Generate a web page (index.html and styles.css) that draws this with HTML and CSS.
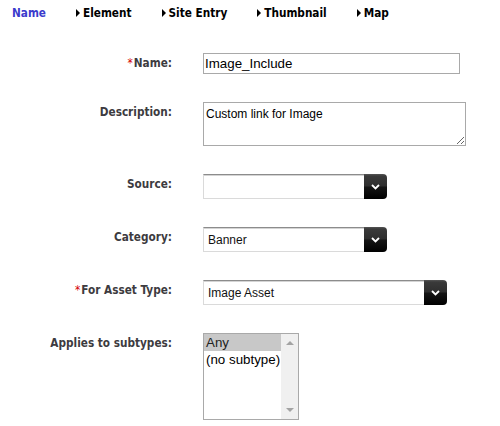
FILE: index.html
```html
<!DOCTYPE html>
<html>
<head>
<meta charset="utf-8">
<link rel="stylesheet" href="styles.css">
</head>
<body>
<nav class="tabs">
  <span class="tab active">Name</span>
  <span class="tab"><i class="tri"></i>Element</span>
  <span class="tab"><i class="tri"></i>Site Entry</span>
  <span class="tab"><i class="tri"></i>Thumbnail</span>
  <span class="tab"><i class="tri"></i>Map</span>
</nav>
<form class="form">
  <label class="lbl"><span class="req">*</span>Name:</label>
  <input class="txt" type="text" value="Image_Include">

  <label class="lbl">Description:</label>
  <textarea class="area">Custom link for Image</textarea>

  <label class="lbl">Source:</label>
  <div class="sel"><div class="sel-field"></div><div class="sel-btn"><svg width="9" height="6" viewBox="0 0 9 6"><polyline points="1,1 4.5,4.5 8,1" fill="none" stroke="#fff" stroke-width="1.8"/></svg></div></div>

  <label class="lbl">Category:</label>
  <div class="sel"><div class="sel-field">Banner</div><div class="sel-btn"><svg width="9" height="6" viewBox="0 0 9 6"><polyline points="1,1 4.5,4.5 8,1" fill="none" stroke="#fff" stroke-width="1.8"/></svg></div></div>

  <label class="lbl"><span class="req">*</span>For Asset Type:</label>
  <div class="sel wide"><div class="sel-field">Image Asset</div><div class="sel-btn"><svg width="9" height="6" viewBox="0 0 9 6"><polyline points="1,1 4.5,4.5 8,1" fill="none" stroke="#fff" stroke-width="1.8"/></svg></div></div>

  <label class="lbl">Applies to subtypes:</label>
  <div class="list">
    <div class="opts">
      <div class="opt chosen">Any</div>
      <div class="opt">(no subtype)</div>
    </div>
    <div class="scroll">
      <i class="arr up"></i>
      <i class="arr down"></i>
    </div>
  </div>
</form>
</body>
</html>
```
FILE: styles.css
```css
body {
  margin: 0;
  background: #fff;
  font-family: "DejaVu Sans Condensed", "DejaVu Sans", sans-serif;
}
.tabs {
  display: flex;
  align-items: center;
  height: 25px;
  padding-left: 12px;
  gap: 30px;
  font-weight: bold;
  font-size: 11.7px;
}
.tab {
  display: flex;
  align-items: center;
  gap: 3px;
  color: #000;
}
.tab.active {
  color: #3b3bcc;
}
.tri {
  width: 0;
  height: 0;
  border-left: 4px solid #000;
  border-top: 4px solid transparent;
  border-bottom: 4px solid transparent;
}
.form {
  display: grid;
  grid-template-columns: 172px auto;
  column-gap: 31px;
  row-gap: 28px;
  margin: 28px 0 0;
  align-items: start;
  justify-items: start;
}
.lbl {
  justify-self: end;
  font-weight: bold;
  font-size: 11.7px;
  line-height: 21px;
  color: #3d3b40;
}
.req {
  color: #d40000;
  font-weight: normal;
  margin-right: 1px;
}
.txt {
  width: 257px;
  height: 21px;
  box-sizing: border-box;
  border: 1px solid #a9a9a9;
  padding: 0 1px;
  margin: 0;
  font: 13.33px "Liberation Sans", Arial, sans-serif;
  color: #000;
  outline: none;
}
.area {
  display: block;
  width: 263px;
  height: 44px;
  box-sizing: border-box;
  border: 1px solid #a9a9a9;
  padding: 4px 2px 2px;
  margin: 0;
  font: 12px/15px "Liberation Sans", Arial, sans-serif;
  color: #000;
  outline: none;
  resize: both;
}
.sel {
  display: flex;
  width: 184px;
  height: 25px;
}
.sel.wide {
  width: 244px;
}
.sel-field {
  flex: 1;
  display: flex;
  align-items: center;
  border: 1px solid #dadada;
  border-top-color: #8c8c8c;
  border-right: none;
  box-shadow: inset 0 1px 0 #d4d4d4;
  background: #fff;
  padding-left: 4px;
  font: 12px "Liberation Sans", Arial, sans-serif;
  color: #111;
}
.sel-btn {
  width: 23px;
  border-radius: 0 4px 4px 0;
  background: linear-gradient(#555 0, #3a3a3a 8%, #2e2e2e 48%, #151515 52%, #000 100%);
  display: flex;
  align-items: center;
  justify-content: center;
}
.sel-btn svg {
  display: block;
  margin-top: 1px;
}
.list {
  display: flex;
  width: 96px;
  height: 87px;
  box-sizing: border-box;
  border: 1px solid #a9a9a9;
  background: #fff;
  font: 13.33px "Liberation Sans", Arial, sans-serif;
  color: #000;
}
.opts {
  flex: 1;
}
.opt {
  height: 17px;
  line-height: 17px;
  padding-left: 2px;
}
.opt.chosen {
  background: #c8c8c8;
  color: #222;
}
.scroll {
  width: 17px;
  background: #f0f0f0;
  display: flex;
  flex-direction: column;
  justify-content: space-between;
  align-items: center;
  padding: 7px 0;
}
.arr {
  width: 0;
  height: 0;
  border-left: 4px solid transparent;
  border-right: 4px solid transparent;
}
.arr.up {
  border-bottom: 4px solid #a3a3a3;
}
.arr.down {
  border-top: 4px solid #a3a3a3;
}
```
